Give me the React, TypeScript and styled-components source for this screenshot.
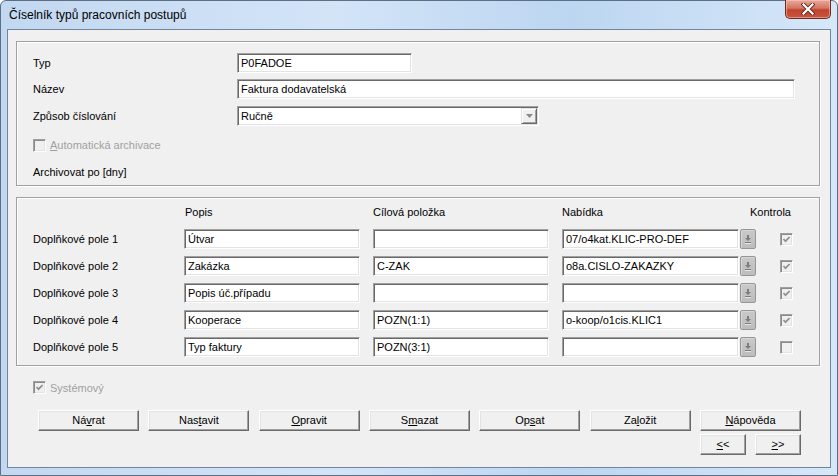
import React from 'react';
import styled, { createGlobalStyle } from 'styled-components';

const Global = createGlobalStyle`
  html, body { margin: 0; padding: 0; background: #ffffff; }
  body { font-family: "Liberation Sans", Arial, sans-serif; font-size: 11px; color: #000; }
  * { box-sizing: border-box; }
`;

const Window = styled.div`
  width: 838px;
  height: 476px;
  display: flex;
  flex-direction: column;
  border: 1px solid #5d6f86;
  border-radius: 6px 6px 0 0;
  background: linear-gradient(90deg, #c2d8f0 0%, #d3e4f7 40%, #bcd6f1 68%, #d6e7f8 100%);
  padding: 0 6px 7px 6px;
`;

const TitleBar = styled.div`
  height: 28px;
  display: flex;
  align-items: flex-start;
`;

const Title = styled.div`
  padding-left: 2px;
  padding-top: 7px;
  font-size: 12px;
  color: #000;
  flex: 1;
  white-space: nowrap;
`;

const CloseButton = styled.div`
  width: 46px;
  height: 19px;
  margin-top: -1px;
  border: 1px solid #6a2a22;
  border-top: none;
  border-radius: 0 0 5px 5px;
  background: linear-gradient(180deg, #e9a99b 0%, #d47563 45%, #c0432f 55%, #c9543c 100%);
  box-shadow: inset 0 0 0 1px rgba(255, 210, 200, 0.5);
  display: flex;
  align-items: center;
  justify-content: center;
`;

const Client = styled.div`
  flex: 1;
  background: #f0f0f0;
  border: 1px solid #71859f;
  padding: 11px 10px 0 8px;
  display: flex;
  flex-direction: column;
`;

const GroupBox = styled.div`
  border: 1px solid #a0a0a0;
  box-shadow: inset 1px 1px 0 #ffffff, 1px 1px 0 #ffffff;
`;

const HeaderGroup = styled(GroupBox)`
  padding: 11px 0 3px 16px;
  display: grid;
  grid-template-columns: 204px auto;
  grid-template-rows: 26px 27px 29px 27px 20px;
  align-items: start;
`;

const FieldGroup = styled(GroupBox)`
  margin-top: 11px;
  padding: 4px 0 8px 16px;
  display: grid;
  grid-template-columns: 151px 189px 189px 194px 40px;
  grid-auto-rows: 20px;
  row-gap: 7px;
  align-items: center;
`;

const Label = styled.div<{ $disabled?: boolean }>`
  height: 20px;
  line-height: 20px;
  white-space: nowrap;
  color: ${(p) => (p.$disabled ? '#a0a0a0' : '#000')};
`;

const ColHeader = styled.div<{ $pad?: number }>`
  white-space: nowrap;
  padding-left: ${(p) => p.$pad ?? 0}px;
`;

const RightCell = styled.div<{ $pad: number }>`
  display: flex;
  justify-content: flex-end;
  align-items: center;
  padding-right: ${(p) => p.$pad}px;
  white-space: nowrap;
`;

const Sunken = styled.div<{ $w: number }>`
  width: ${(p) => p.$w}px;
  height: 20px;
  background: #ffffff;
  border: 1px solid;
  border-color: #a0a0a0 #ffffff #ffffff #a0a0a0;
  box-shadow: inset 1px 1px 0 #696969, inset -1px -1px 0 #e3e3e3;
  padding: 0 3px;
  line-height: 18px;
  white-space: nowrap;
  overflow: hidden;
  display: flex;
  align-items: center;
`;

const SelectBox = styled(Sunken)`
  padding-right: 1px;
  justify-content: space-between;
`;

const SelectArrow = styled.div`
  width: 16px;
  height: 16px;
  background: #f0f0f0;
  border: 1px solid;
  border-color: #e3e3e3 #696969 #696969 #e3e3e3;
  box-shadow: inset 1px 1px 0 #ffffff, inset -1px -1px 0 #a0a0a0;
  display: flex;
  align-items: center;
  justify-content: center;
`;

const NabCell = styled.div`
  display: flex;
  align-items: center;
  gap: 1px;
`;

const PickButton = styled.div`
  width: 16px;
  height: 20px;
  background: linear-gradient(180deg, #c9c9c9 0%, #bdbdbd 100%);
  border: 1px solid #969696;
  border-radius: 2px;
  box-shadow: inset 1px 1px 0 #d6d6d6;
  display: flex;
  align-items: center;
  justify-content: center;
`;

const CheckRow = styled.div<{ $span?: boolean }>`
  display: flex;
  align-items: center;
  gap: 4px;
  height: 20px;
  grid-column: ${(p) => (p.$span ? '1 / -1' : 'auto')};
`;

const Box = styled.span`
  width: 13px;
  height: 13px;
  flex: none;
  background: #f0f0f0;
  border: 1px solid;
  border-color: #a0a0a0 #ffffff #ffffff #a0a0a0;
  box-shadow: inset 1px 1px 0 #8a8a8a, inset -1px -1px 0 #e3e3e3;
  display: flex;
  align-items: center;
  justify-content: center;
`;

const SystemRow = styled.div`
  margin-top: 15px;
  padding-left: 17px;
  height: 13px;
  display: flex;
  align-items: center;
  gap: 4px;
  color: #a0a0a0;
`;

const ButtonRow = styled.div`
  margin-top: 16px;
  margin-left: 22px;
  width: 763px;
  display: grid;
  grid-template-columns: repeat(7, 101px);
  justify-content: space-between;
`;

const NavRow = styled.div`
  margin-top: 3px;
  margin-left: 22px;
  width: 763px;
  display: flex;
  justify-content: flex-end;
  gap: 9px;
`;

const Button = styled.div<{ $w?: number }>`
  width: ${(p) => p.$w ?? 101}px;
  height: 21px;
  background: #f0f0f0;
  border: 1px solid;
  border-color: #ffffff #696969 #696969 #ffffff;
  box-shadow: inset -1px -1px 0 #a0a0a0, inset 1px 1px 0 #e3e3e3;
  display: flex;
  align-items: center;
  justify-content: center;
  white-space: nowrap;
  padding-bottom: 1px;
`;

const Check = ({ checked }: { checked: boolean }) => (
  <Box>
    {checked && (
      <svg width="9" height="9" viewBox="0 0 9 9">
        <polyline points="1.5,4 3.5,6.2 7.6,2" fill="none" stroke="#8f8f8f" strokeWidth="1.7" />
      </svg>
    )}
  </Box>
);

const PickIcon = () => (
  <svg width="8" height="10" viewBox="0 0 8 10">
    <path d="M3 1h2v3h2l-3 3l-3-3h2z" fill="#7d7d7d" />
    <rect x="1" y="8" width="6" height="1" fill="#7d7d7d" />
    <rect x="1" y="9" width="6" height="1" fill="#e6e6e6" />
  </svg>
);

const rows = [
  { label: 'Doplňkové pole 1', popis: 'Útvar', cil: '', nab: '07/o4kat.KLIC-PRO-DEF', kontrola: true },
  { label: 'Doplňkové pole 2', popis: 'Zakázka', cil: 'C-ZAK', nab: 'o8a.CISLO-ZAKAZKY', kontrola: true },
  { label: 'Doplňkové pole 3', popis: 'Popis úč.případu', cil: '', nab: '', kontrola: true },
  { label: 'Doplňkové pole 4', popis: 'Kooperace', cil: 'POZN(1:1)', nab: 'o-koop/o1cis.KLIC1', kontrola: true },
  { label: 'Doplňkové pole 5', popis: 'Typ faktury', cil: 'POZN(3:1)', nab: '', kontrola: false },
];

export default function App() {
  return (
    <>
      <Global />
      <Window>
        <TitleBar>
          <Title>Číselník typů pracovních postupů</Title>
          <CloseButton>
            <svg width="14" height="12" viewBox="0 0 14 12">
              <path d="M2.5 1.5 L11.5 10.5 M11.5 1.5 L2.5 10.5" stroke="#5a2a24" strokeWidth="4" strokeLinecap="square" />
              <path d="M2.5 1.5 L11.5 10.5 M11.5 1.5 L2.5 10.5" stroke="#ffffff" strokeWidth="2.2" strokeLinecap="square" />
            </svg>
          </CloseButton>
        </TitleBar>
        <Client>
          <HeaderGroup>
            <Label>Typ</Label>
            <Sunken $w={175}>P0FADOE</Sunken>
            <Label>Název</Label>
            <Sunken $w={558}>Faktura dodavatelská</Sunken>
            <Label>Způsob číslování</Label>
            <SelectBox $w={302}>
              <span>Ručně</span>
              <SelectArrow>
                <svg width="7" height="4" viewBox="0 0 7 4">
                  <path d="M0 0h7l-3.5 4z" fill="#8a8a8a" />
                </svg>
              </SelectArrow>
            </SelectBox>
            <CheckRow $span>
              <Check checked={false} />
              <Label $disabled>
                <u>A</u>utomatická archivace
              </Label>
            </CheckRow>
            <Label>Archivovat po [dny]</Label>
          </HeaderGroup>

          <FieldGroup>
            <div />
            <ColHeader $pad={1}>Popis</ColHeader>
            <ColHeader>Cílová položka</ColHeader>
            <ColHeader>Nabídka</ColHeader>
            <RightCell $pad={5}>Kontrola</RightCell>
            {rows.map((r) => (
              <React.Fragment key={r.label}>
                <Label>{r.label}</Label>
                <Sunken $w={176}>{r.popis}</Sunken>
                <Sunken $w={176}>{r.cil}</Sunken>
                <NabCell>
                  <Sunken $w={177}>{r.nab}</Sunken>
                  <PickButton>
                    <PickIcon />
                  </PickButton>
                </NabCell>
                <RightCell $pad={3}>
                  <Check checked={r.kontrola} />
                </RightCell>
              </React.Fragment>
            ))}
          </FieldGroup>

          <SystemRow>
            <Check checked />
            <span>Systémový</span>
          </SystemRow>

          <ButtonRow>
            <Button>Ná<u>v</u>rat</Button>
            <Button>Nas<u>t</u>avit</Button>
            <Button><u>O</u>pravit</Button>
            <Button>S<u>m</u>azat</Button>
            <Button>Op<u>s</u>at</Button>
            <Button>Za<u>l</u>ožit</Button>
            <Button><u>N</u>ápověda</Button>
          </ButtonRow>
          <NavRow>
            <Button $w={46}><u>&lt;</u>&lt;</Button>
            <Button $w={46}><u>&gt;</u>&gt;</Button>
          </NavRow>
        </Client>
      </Window>
    </>
  );
}
